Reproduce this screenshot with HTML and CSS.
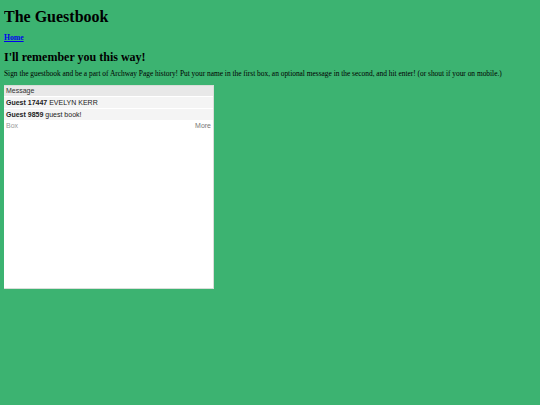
FILE: index.html
```html
<!DOCTYPE html>
<html>
<head>
<meta charset="utf-8">
<title>The Guestbook</title>
<link rel="stylesheet" href="styles.css">
</head>
<body>
<h1 class="title">The Guestbook</h1>
<div class="nav"><a href="#" class="home">Home</a></div>
<h2 class="sub">I'll remember you this way!</h2>
<p class="intro">Sign the guestbook and be a part of Archway Page history! Put your name in the first box, an optional message in the second, and hit enter! (or shout if your on mobile.)</p>
<div class="book">
  <div class="book-head">Message</div>
  <div class="entry"><b>Guest 17447</b> EVELYN KERR</div>
  <div class="entry"><b>Guest 9859</b> guest book!</div>
  <div class="book-foot"><span class="foot-left">Box</span><span class="foot-right">More</span></div>
</div>
</body>
</html>
```
FILE: styles.css
```css
html, body {
  background: #3cb371;
}
body {
  margin: 0 4px;
  font-family: "Liberation Serif", serif;
  color: #000;
}
.title {
  font-size: 16px;
  line-height: 18px;
  margin: 0;
  padding-top: 8px;
  font-weight: bold;
}
.nav {
  margin-top: 7px;
  font-size: 7.7px;
  line-height: 10px;
  font-weight: bold;
}
.home {
  color: #0000ee;
}
.sub {
  font-size: 12px;
  line-height: 14px;
  margin: 7px 0 0 0;
}
.intro {
  font-size: 7.4px;
  line-height: 10px;
  margin: 5px 0 0 0;
}
.book {
  margin: 6px 0 0 -1px;
  width: 209px;
  height: 202px;
  background: #fff;
  border: 1px solid #d9ded9;
  font-family: "Liberation Sans", Arial, sans-serif;
  font-size: 7px;
  color: #222;
}
.book-head {
  background: #e8e8e8;
  height: 10px;
  line-height: 10px;
  padding-left: 2px;
  color: #333;
}
.entry {
  background: #f4f4f4;
  height: 11px;
  line-height: 11px;
  padding-left: 2px;
  margin-top: 1px;
}
.book-foot {
  display: flex;
  justify-content: space-between;
  height: 10px;
  line-height: 10px;
  padding: 0 2px;
  margin-top: 1px;
}
.foot-left {
  color: #999;
}
.foot-right {
  color: #777;
}
```
